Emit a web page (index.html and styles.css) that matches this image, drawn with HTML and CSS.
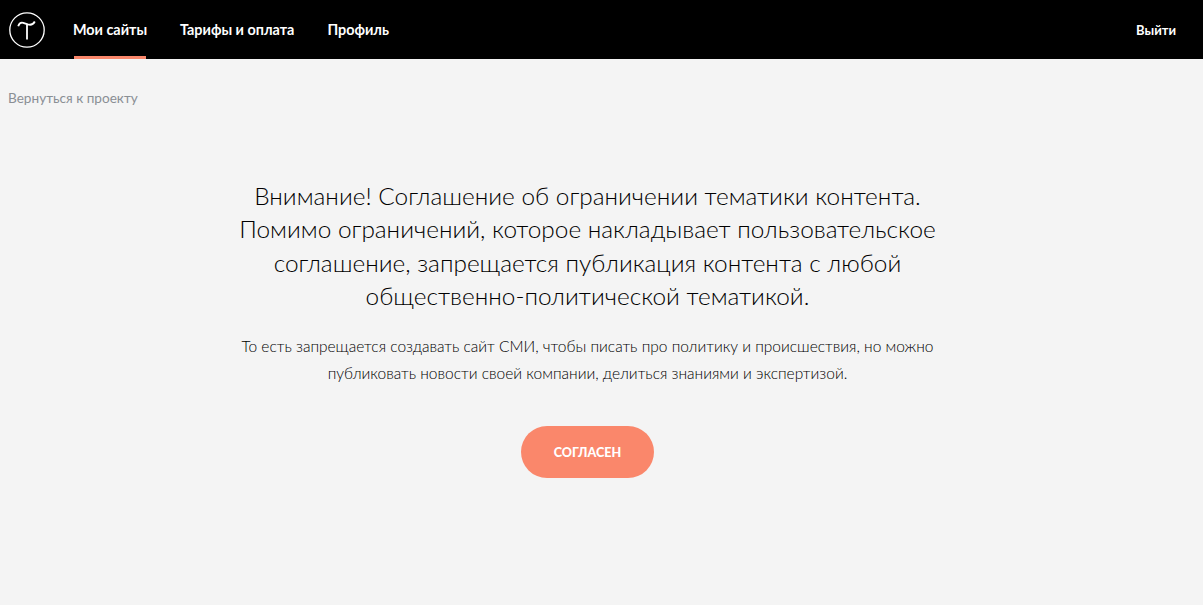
FILE: index.html
```html
<!DOCTYPE html>
<html lang="ru">
<head>
<meta charset="utf-8">
<title>Мои сайты</title>
<link rel="stylesheet" href="styles.css">
</head>
<body>
<header class="topbar">
  <a class="logo" href="#" aria-label="Tilda">
    <svg class="logo-icon" viewBox="0 0 36 36" width="36" height="36" fill="none" stroke="#fff">
      <circle cx="18" cy="18" r="17.2" stroke-width="1.3"/>
      <path d="M9.2 14.2c1-2.9 2.9-4 5-3.4l4.600 1.600c2.600.8 5.400.2 7-2.900" stroke-width="1.800"/>
      <path d="M18 12.400V27.500" stroke-width="1.800"/>
    </svg>
  </a>
  <nav class="nav">
    <a class="nav-item nav-item-active" href="#">Мои сайты</a>
    <a class="nav-item" href="#">Тарифы и оплата</a>
    <a class="nav-item" href="#">Профиль</a>
  </nav>
  <a class="nav-item logout" href="#">Выйти</a>
</header>
<a class="back" href="#">Вернуться к проекту</a>
<main class="notice">
  <h1 class="notice-title">Внимание! Соглашение об ограничении тематики контента.<br>Помимо ограничений, которое накладывает пользовательское<br>соглашение, запрещается публикация контента с любой<br>общественно-политической тематикой.</h1>
  <p class="notice-text">То есть запрещается создавать сайт СМИ, чтобы писать про политику и происшествия, но можно<br>публиковать новости своей компании, делиться знаниями и экспертизой.</p>
  <button class="agree" type="button">СОГЛАСЕН</button>
</main>
</body>
</html>
```
FILE: styles.css
```css
* { box-sizing: border-box; }
html, body { margin: 0; height: 100%; }
body {
  background: #f4f4f4;
  color: #000;
  font-family: "Lato", "Noto Sans", sans-serif;
  overflow: hidden;
}
a { text-decoration: none; color: inherit; }
.topbar {
  display: flex;
  align-items: stretch;
  height: 59px;
  background: #000;
  padding: 0 27px 0 9px;
}
.logo { display: flex; align-items: center; margin-right: 29px; }
.logo-icon { display: block; }
.nav { display: flex; gap: 33px; flex: 1; }
.nav-item {
  display: flex;
  align-items: center;
  justify-content: center;
  color: #fff;
  font-size: 14.4px;
  font-weight: 700;
  border-bottom: 3px solid transparent;
  padding-top: 3px;
  white-space: nowrap;
}
.nav-item-active { border-bottom-color: #fa876b; width: 72px; margin-right: 1px; }
.logout { font-size: 13px; }
.back {
  display: block;
  margin: 31px 0 0 8px;
  font-size: 13.6px;
  line-height: 17px;
  color: #8a8f94;
  font-weight: 400;
}
.notice {
  width: 699px;
  margin: 72px 0 0 238px;
  text-align: center;
}
.notice-title {
  margin: 0;
  font-size: 24.4px;
  line-height: 33.3px;
  font-weight: 300;
  color: #000;
  white-space: nowrap;
}
.notice-text {
  margin: 21px 0 0;
  font-size: 15.5px;
  line-height: 27px;
  font-weight: 300;
  color: #000;
  white-space: nowrap;
}
.agree {
  display: block;
  width: 133px;
  height: 52px;
  margin: 39px auto 0;
  padding-top: 2px;
  border: 0;
  border-radius: 26px;
  background: #fa876b;
  color: #fff;
  font-family: inherit;
  font-size: 12.6px;
  font-weight: 900;
}
```
